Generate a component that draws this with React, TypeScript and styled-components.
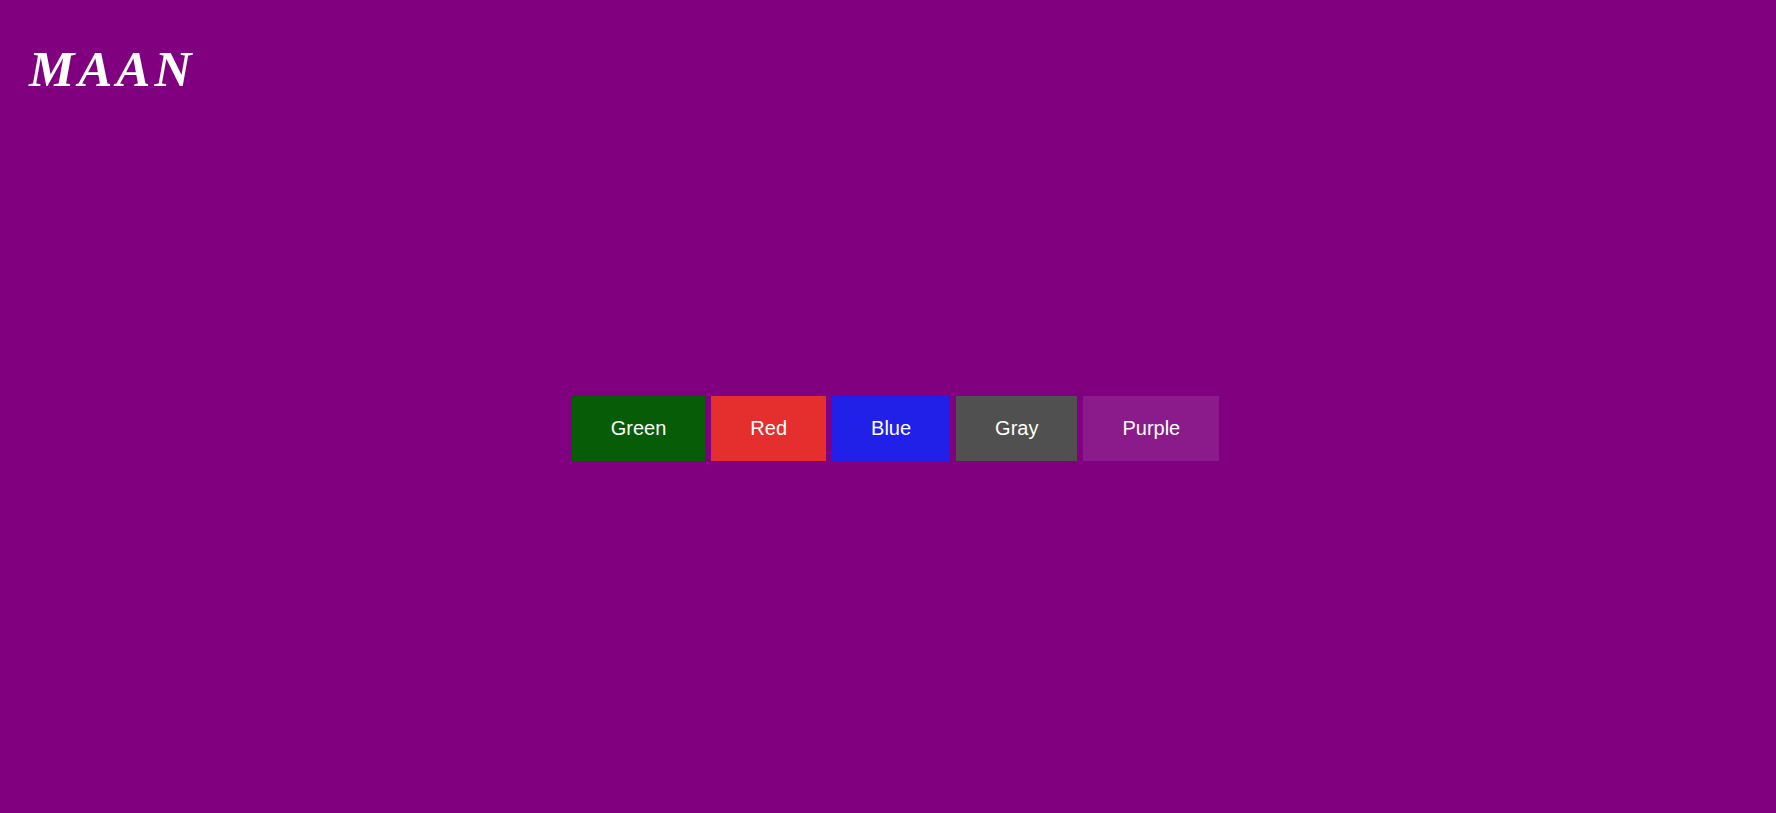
import React from "react";
import styled, { createGlobalStyle } from "styled-components";

const GlobalStyle = createGlobalStyle`
  html, body {
    margin: 0;
    padding: 0;
    background: #800080;
  }
`;

const Page = styled.div`
  min-height: 100vh;
  display: flex;
  flex-direction: column;
  font-family: "Liberation Sans", Arial, sans-serif;
`;

const Header = styled.header`
  height: 44px;
  padding: 0 29px;
  display: flex;
  align-items: flex-start;
`;

const Logo = styled.h1`
  margin: 0;
  padding-top: 44px;
  font-family: "Liberation Serif", "Times New Roman", serif;
  font-style: italic;
  font-weight: 700;
  font-size: 51px;
  line-height: 1;
  letter-spacing: 4px;
  color: #fff;
`;

const Main = styled.main`
  flex: 1;
  display: flex;
  align-items: center;
  justify-content: center;
  padding-left: 15px;
`;

const Buttons = styled.div`
  display: flex;
  gap: 6px;
`;

const ColorButton = styled.button<{ $bg: string }>`
  height: 65px;
  padding: 0 39px;
  border: none;
  background: ${(p) => p.$bg};
  color: #fff;
  font-family: "Liberation Sans", Arial, sans-serif;
  font-size: 20px;
  cursor: pointer;
`;

const colors = [
  { name: "Green", bg: "#075c07" },
  { name: "Red", bg: "#e52e2e" },
  { name: "Blue", bg: "#2020e8" },
  { name: "Gray", bg: "#505050" },
  { name: "Purple", bg: "#8b1a8b" },
];

const App = () => {
  return (
    <>
      <GlobalStyle />
      <Page>
        <Header>
          <Logo>MAAN</Logo>
        </Header>
        <Main>
          <Buttons>
            {colors.map((c) => (
              <ColorButton key={c.name} $bg={c.bg}>
                {c.name}
              </ColorButton>
            ))}
          </Buttons>
        </Main>
      </Page>
    </>
  );
};

export default App;
